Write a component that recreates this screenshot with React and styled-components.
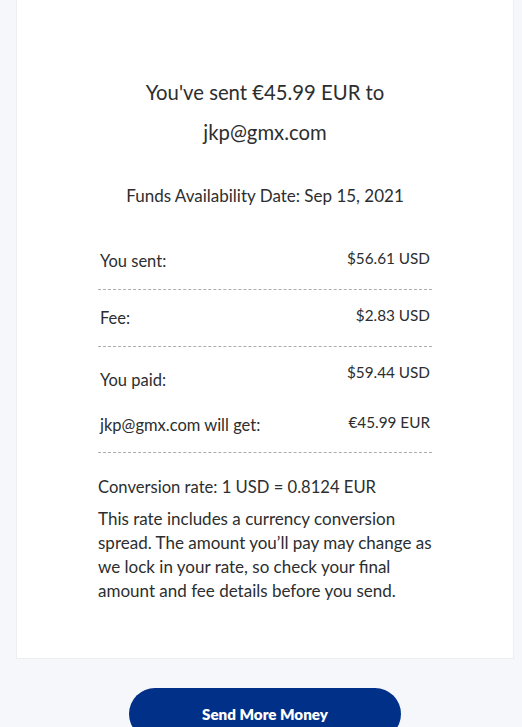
import React from "react";
import styled, { createGlobalStyle } from "styled-components";

const GlobalStyle = createGlobalStyle`
  body {
    margin: 0;
    background: #f5f7fa;
    font-family: Lato, "Noto Sans", sans-serif;
    color: #2c2e2f;
  }
`;

const Page = styled.div`
  padding: 0 8px 40px 16px;
`;

const Card = styled.div`
  background: #ffffff;
  border: 1px solid #eceef0;
  border-top: none;
  padding: 72px 0 55px;
`;

const Content = styled.div`
  width: 334px;
  margin: 0 auto;
`;

const Heading = styled.h1`
  margin: 0;
  font-size: 20.3px;
  line-height: 40px;
  font-weight: 400;
  text-align: center;
  color: #2c2e2f;
`;

const DateLine = styled.p`
  margin: 32px 0 25px;
  font-size: 17px;
  line-height: 24px;
  text-align: center;
`;

const Row = styled.div`
  display: flex;
  justify-content: space-between;
  align-items: flex-start;
  padding: ${(p) => p.$pad};
  border-bottom: ${(p) => (p.$line ? "1px dashed #a9aeb2" : "none")};
  line-height: 20px;
`;

const Label = styled.span`
  padding-left: 2px;
  margin-top: ${(p) => p.$offset}px;
  font-size: 16.5px;
`;

const Value = styled.span`
  padding-right: 2px;
  font-size: 15.3px;
`;

const Rate = styled.p`
  margin: 22px 0 8px;
  font-size: 16.6px;
  line-height: 24px;
`;

const Note = styled.p`
  margin: 0;
  font-size: 17px;
  line-height: 24px;
`;

const Actions = styled.div`
  display: flex;
  justify-content: center;
  padding-top: 29px;
`;

const PrimaryButton = styled.button`
  width: 272px;
  height: 52px;
  border: none;
  border-radius: 26px;
  background: #003087;
  color: #ffffff;
  font-family: Lato, "Noto Sans", sans-serif;
  font-weight: 800;
  font-size: 15.2px;
  cursor: pointer;
`;

const rows = [
  { label: "You sent:", value: "$56.61 USD", pad: "15px 0 18px", offset: 3, line: true },
  { label: "Fee:", value: "$2.83 USD", pad: "15px 0 18px", offset: 3, line: true },
  { label: "You paid:", value: "$59.44 USD", pad: "15px 0 0", offset: 8, line: false },
  { label: "jkp@gmx.com will get:", value: "€45.99 EUR", pad: "22px 0 17px", offset: 3, line: true },
];

export default function App() {
  return (
    <>
      <GlobalStyle />
      <Page>
        <Card>
          <Content>
            <Heading>
              You've sent €45.99 EUR to
              <br />
              jkp@gmx.com
            </Heading>
            <DateLine>Funds Availability Date: Sep 15, 2021</DateLine>
            {rows.map((r) => (
              <Row key={r.label} $pad={r.pad} $line={r.line}>
                <Label $offset={r.offset}>{r.label}</Label>
                <Value>{r.value}</Value>
              </Row>
            ))}
            <Rate>Conversion rate: 1 USD = 0.8124 EUR</Rate>
            <Note>
              This rate includes a currency conversion spread. The amount you’ll
              pay may change as we lock in your rate, so check your final amount
              and fee details before you send.
            </Note>
          </Content>
        </Card>
        <Actions>
          <PrimaryButton>Send More Money</PrimaryButton>
        </Actions>
      </Page>
    </>
  );
}
